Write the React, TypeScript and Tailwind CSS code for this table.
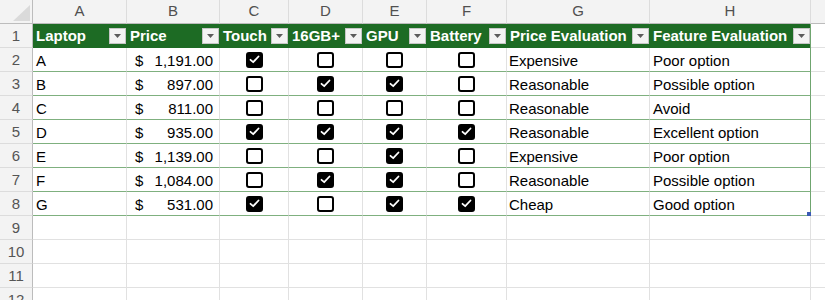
import React from 'react';

interface Laptop {
  name: string;
  price: string;
  touch: boolean;
  ram: boolean;
  gpu: boolean;
  battery: boolean;
  priceEval: string;
  featureEval: string;
}

const laptops: Laptop[] = [
  { name: 'A', price: '1,191.00', touch: true, ram: false, gpu: false, battery: false, priceEval: 'Expensive', featureEval: 'Poor option' },
  { name: 'B', price: '897.00', touch: false, ram: true, gpu: true, battery: false, priceEval: 'Reasonable', featureEval: 'Possible option' },
  { name: 'C', price: '811.00', touch: false, ram: false, gpu: false, battery: false, priceEval: 'Reasonable', featureEval: 'Avoid' },
  { name: 'D', price: '935.00', touch: true, ram: true, gpu: true, battery: true, priceEval: 'Reasonable', featureEval: 'Excellent option' },
  { name: 'E', price: '1,139.00', touch: false, ram: false, gpu: true, battery: false, priceEval: 'Expensive', featureEval: 'Poor option' },
  { name: 'F', price: '1,084.00', touch: false, ram: true, gpu: true, battery: false, priceEval: 'Reasonable', featureEval: 'Possible option' },
  { name: 'G', price: '531.00', touch: true, ram: false, gpu: true, battery: true, priceEval: 'Cheap', featureEval: 'Good option' },
];

const letters = ['A', 'B', 'C', 'D', 'E', 'F', 'G', 'H'];
const headers = ['Laptop', 'Price', 'Touch', '16GB+', 'GPU', 'Battery', 'Price Evaluation', 'Feature Evaluation'];

const Checkbox: React.FC<{ checked: boolean }> = ({ checked }) => (
  <div
    className={`w-[17px] h-[16px] rounded-[3px] border-2 border-black flex items-center justify-center ${
      checked ? 'bg-black' : 'bg-white'
    }`}
  >
    {checked && (
      <svg width="11" height="9" viewBox="0 0 11 9">
        <path d="M1.5 4.8 L4.2 7.2 L9.5 1.5" fill="none" stroke="white" strokeWidth="1.8" strokeLinecap="round" strokeLinejoin="round" />
      </svg>
    )}
  </div>
);

const Dropdown: React.FC = () => (
  <div className="w-[17px] h-[16px] bg-[#f3f3f3] border border-[#c6c6c6] flex items-center justify-center shrink-0">
    <svg width="7" height="4" viewBox="0 0 7 4">
      <path d="M0 0 L7 0 L3.5 4 Z" fill="#5b5b5b" />
    </svg>
  </div>
);

const RowNum: React.FC<{ n: number }> = ({ n }) => (
  <div className="h-[24px] pt-[2px] bg-[#f3f3f3] border-r border-r-[#bcbcbc] border-b border-b-[#dcdcdc] flex items-center justify-center text-[15px] text-[#555]">
    {n}
  </div>
);

const Blank: React.FC<{ last?: boolean }> = ({ last }) => (
  <div className={`h-[24px] border-b border-[#e1e1e1] ${last ? '' : 'border-r'}`} />
);

const App: React.FC = () => {
  return (
    <div
      className="w-[825px] h-[300px] overflow-hidden bg-white text-black"
      style={{ fontFamily: '"Liberation Sans", Arial, sans-serif' }}
    >
      <div className="grid grid-cols-[33px_94px_93px_69px_74px_64px_80px_143px_161px_1fr]">
        {/* column letters */}
        <div className="h-[24px] bg-[#f3f3f3] border-r border-r-[#bcbcbc] border-b border-b-[#bcbcbc] relative">
          <svg className="absolute right-[2px] bottom-[2px]" width="17" height="16" viewBox="0 0 17 16">
            <path d="M17 0 L17 16 L0 16 Z" fill="#dadada" />
          </svg>
        </div>
        {letters.map((l) => (
          <div
            key={l}
            className="h-[24px] bg-[#f3f3f3] border-r border-r-[#dcdcdc] border-b border-b-[#bcbcbc] flex items-center justify-center text-[15px] text-[#505050]"
          >
            {l}
          </div>
        ))}
        <div className="h-[24px] bg-[#f3f3f3] border-b border-b-[#bcbcbc]" />

        {/* table header row */}
        <RowNum n={1} />
        {headers.map((h, i) => (
          <div
            key={h}
            className={`h-[24px] bg-[#1d6b24] flex items-center justify-between pl-[3px] text-[15px] font-bold text-white whitespace-nowrap overflow-hidden ${
              i === 7 ? 'border-r border-r-[#6fa56f]' : ''
            }`}
          >
            <span>{h}</span>
            <div className={i === 7 ? 'mr-0' : 'mr-[1px]'}>
              <Dropdown />
            </div>
          </div>
        ))}
        <Blank last />

        {/* table body */}
        {laptops.map((r, idx) => {
          const cell = 'h-[24px] border-b border-b-[#7fb07f] border-r border-r-[#e1e1e1] flex items-center text-[15px] whitespace-nowrap';
          return (
            <React.Fragment key={r.name}>
              <RowNum n={idx + 2} />
              <div className={`${cell} pl-[3px] pt-[3px]`}>{r.name}</div>
              <div className={`${cell} justify-between pl-[8px] pr-[6px] pt-[3px]`}>
                <span>$</span>
                <span>{r.price}</span>
              </div>
              {[r.touch, r.ram, r.gpu, r.battery].map((c, j) => (
                <div key={j} className={`${cell} justify-center`}>
                  <Checkbox checked={c} />
                </div>
              ))}
              <div className={`${cell} pl-[2px] pt-[3px]`}>{r.priceEval}</div>
              <div className="h-[24px] border-b border-b-[#7fb07f] border-r border-r-[#6fa56f] flex items-center text-[15px] whitespace-nowrap pl-[3px] pt-[3px] relative">
                {r.featureEval}
                {idx === laptops.length - 1 && (
                  <div className="absolute right-[-1px] bottom-[-1px] w-[4px] h-[4px] bg-[#3b5bb5]" />
                )}
              </div>
              <Blank last />
            </React.Fragment>
          );
        })}

        {/* empty rows */}
        {[9, 10, 11, 12].map((n) => (
          <React.Fragment key={n}>
            <RowNum n={n} />
            {letters.map((l) => (
              <Blank key={l} />
            ))}
            <Blank last />
          </React.Fragment>
        ))}
      </div>
    </div>
  );
};

export default App;
